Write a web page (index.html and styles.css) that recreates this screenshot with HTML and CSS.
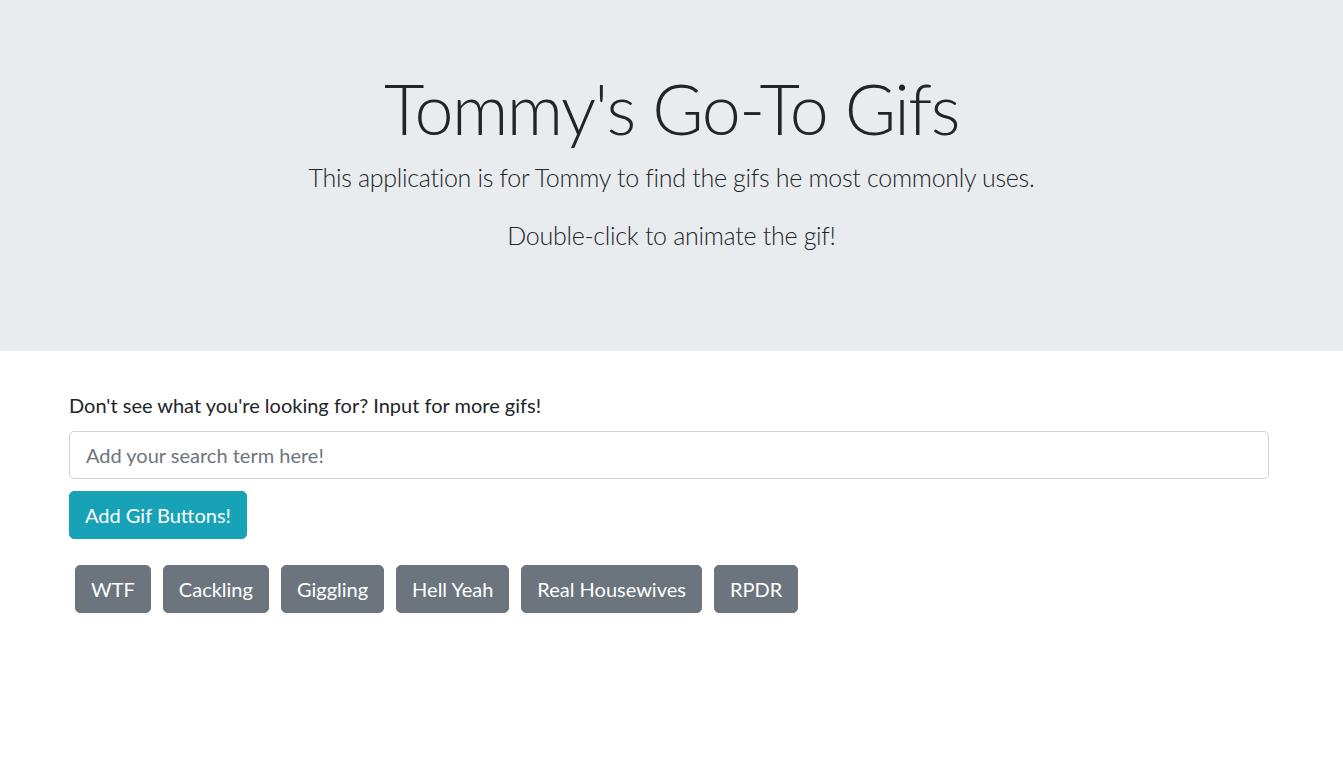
FILE: index.html
```html
<!DOCTYPE html>
<html lang="en">
<head>
<meta charset="utf-8">
<title>Tommy's Go-To Gifs</title>
<link rel="stylesheet" href="styles.css">
</head>
<body>
<header class="jumbotron">
  <h1 class="display">Tommy's Go-To Gifs</h1>
  <p class="lead">This application is for Tommy to find the gifs he most commonly uses.</p>
  <p class="lead lead-second">Double-click to animate the gif!</p>
</header>
<main class="content">
  <form class="search-form">
    <label class="search-label" for="search">Don't see what you're looking for? Input for more gifs!</label>
    <input class="search-input" id="search" type="text" placeholder="Add your search term here!">
    <button class="btn btn-info" type="button">Add Gif Buttons!</button>
  </form>
  <div class="gif-buttons">
    <button class="btn btn-secondary" type="button">WTF</button>
    <button class="btn btn-secondary" type="button">Cackling</button>
    <button class="btn btn-secondary" type="button">Giggling</button>
    <button class="btn btn-secondary" type="button">Hell Yeah</button>
    <button class="btn btn-secondary" type="button">Real Housewives</button>
    <button class="btn btn-secondary" type="button">RPDR</button>
  </div>
</main>
</body>
</html>
```
FILE: styles.css
```css
* { box-sizing: border-box; }
html, body { margin: 0; padding: 0; }
body {
  font-family: Lato, "Open Sans", sans-serif;
  font-size: 20px;
  line-height: 1.5;
  color: #212529;
  background: #fff;
}
.jumbotron {
  background: #e9ecef;
  height: 351px;
  padding: 66px 32px 0;
  text-align: center;
}
.display {
  margin: 0 0 9px;
  font-size: 70px;
  font-weight: 300;
  line-height: 84px;
  letter-spacing: -1.5px;
}
.lead {
  margin: 0;
  font-size: 25px;
  font-weight: 300;
  line-height: 37.5px;
  letter-spacing: -0.3px;
}
.lead-second { margin-top: 20px; }
.content {
  padding: 39px 74px 0 69px;
}
.search-form {
  display: flex;
  flex-direction: column;
  align-items: flex-start;
}
.search-label {
  font-size: 20px;
  line-height: 30px;
  margin-bottom: 11px;
}
.search-input {
  width: 100%;
  height: 48px;
  padding: 7px 16px;
  font-family: inherit;
  font-size: 20px;
  color: #495057;
  border: 1px solid #ced4da;
  border-radius: 5px;
  background: #fff;
  margin-bottom: 12px;
}
.search-input::placeholder { color: #6c757d; }
.btn {
  font-family: inherit;
  font-size: 20px;
  line-height: 30px;
  padding: 8px 15px;
  border: 1px solid transparent;
  border-radius: 5px;
  color: #fff;
  cursor: pointer;
}
.btn-info { background: #17a2b8; border-color: #17a2b8; }
.btn-secondary { background: #6c757d; border-color: #6c757d; }
.gif-buttons {
  display: flex;
  gap: 12px;
  margin: 26px 0 0 6px;
}
```
